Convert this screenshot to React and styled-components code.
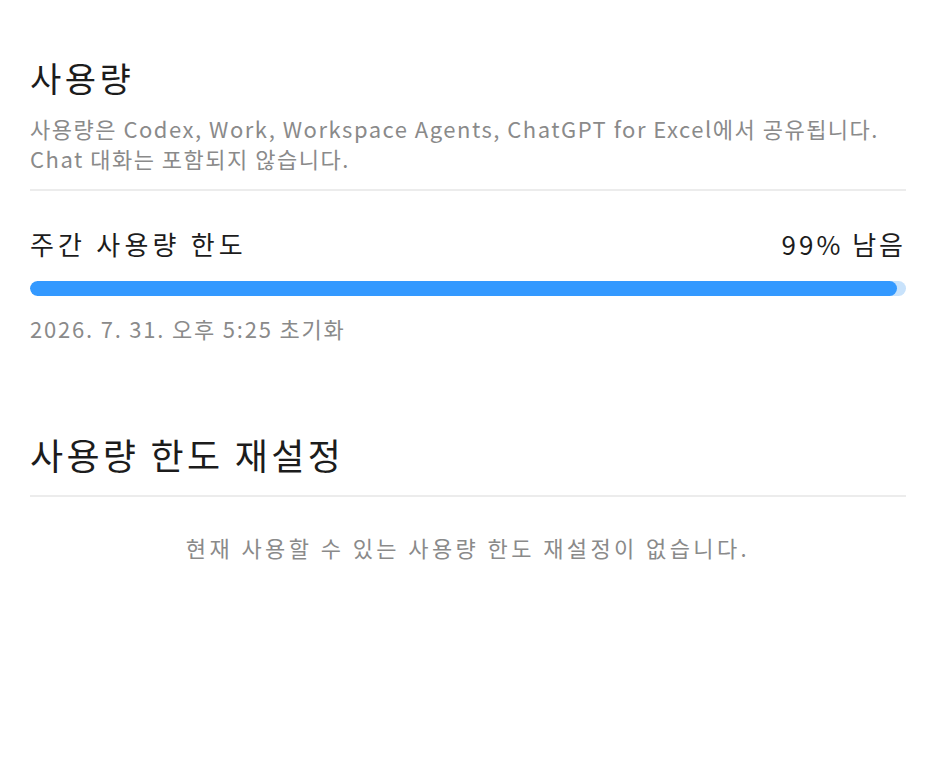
import styled, { createGlobalStyle } from "styled-components";

const GlobalStyle = createGlobalStyle`
  body {
    margin: 0;
    background: #ffffff;
    font-family: "Noto Sans CJK KR", "Noto Sans", sans-serif;
    color: #1f1f1f;
  }
`;

const Page = styled.main`
  padding: 56px 20px 0 30px;
  width: 876px;
`;

const Section = styled.section`
  margin-bottom: ${(p) => p.$gap || "0"};
`;

const Title = styled.h1`
  margin: 0;
  font-size: ${(p) => p.$size || "34px"};
  font-weight: 400;
  line-height: ${(p) => p.$lh || "44px"};
  color: #1c1c1c;
  letter-spacing: ${(p) => p.$ls || "3.5px"};
`;

const Description = styled.p`
  margin: 13px 0 0;
  font-size: 22px;
  line-height: 30px;
  color: #8a8a8a;
  letter-spacing: 1.5px;
`;

const Divider = styled.hr`
  border: none;
  border-top: 2px solid #ececec;
  margin: ${(p) => p.$margin || "16px 0 0"};
`;

const LimitRow = styled.div`
  display: flex;
  justify-content: space-between;
  align-items: center;
  margin-top: 36px;
  font-size: 26px;
  line-height: 34px;
  color: #1c1c1c;
  letter-spacing: 3px;
`;

const LimitName = styled.span`
  letter-spacing: 4.2px;
`;

const Track = styled.div`
  margin-top: 20px;
  height: 15px;
  border-radius: 8px;
  background: #c8e2fb;
  overflow: hidden;
`;

const Fill = styled.div`
  height: 100%;
  border-radius: 8px;
  background: #3399ff;
`;

const ResetTime = styled.div`
  margin-top: 17px;
  font-size: 22px;
  line-height: 30px;
  color: #8a8a8a;
  letter-spacing: 1.8px;
`;

const Empty = styled.p`
  margin: 35px 0 0;
  text-align: center;
  font-size: 22px;
  line-height: 30px;
  color: #8a8a8a;
  letter-spacing: 3.4px;
`;

const App = () => {
  const remaining = 99;

  return (
    <>
      <GlobalStyle />
      <Page>
        <Section $gap="88px">
          <Title>사용량</Title>
          <Description>
            사용량은 Codex, Work, Workspace Agents, ChatGPT for Excel에서 공유됩니다.
            <br />
            Chat 대화는 포함되지 않습니다.
          </Description>
          <Divider />
          <LimitRow>
            <LimitName>주간 사용량 한도</LimitName>
            <span>{remaining}% 남음</span>
          </LimitRow>
          <Track>
            <Fill style={{ width: `${remaining}%` }} />
          </Track>
          <ResetTime>2026. 7. 31. 오후 5:25 초기화</ResetTime>
        </Section>
        <Section>
          <Title $size="36px" $lh="46px" $ls="3.3px">
            사용량 한도 재설정
          </Title>
          <Divider $margin="18px 0 0" />
          <Empty>현재 사용할 수 있는 사용량 한도 재설정이 없습니다.</Empty>
        </Section>
      </Page>
    </>
  );
};

export default App;
